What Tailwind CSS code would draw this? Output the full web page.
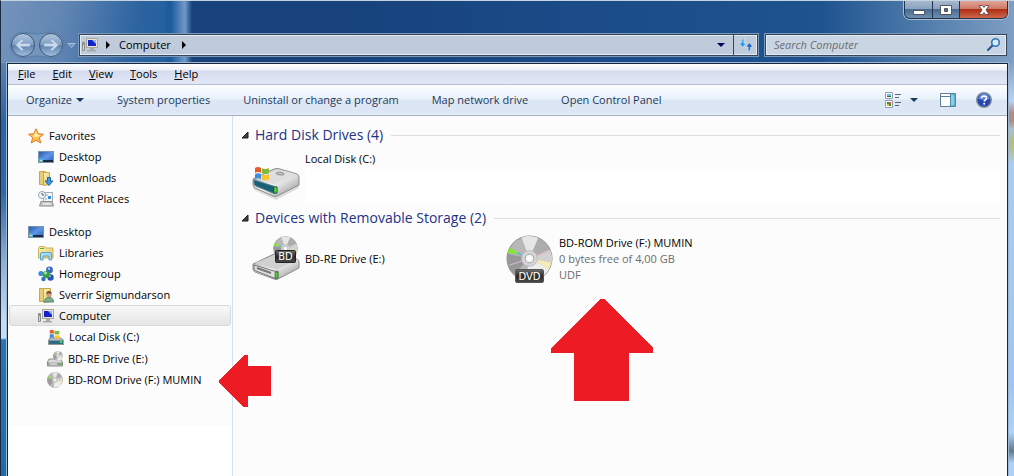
<!DOCTYPE html>
<html lang="en">

<head>
    <meta charset="UTF-8">
    <meta name="viewport" content="width=device-width, initial-scale=1.0">
    <title>Computer</title>
    <script src="https://cdn.jsdelivr.net/npm/@tailwindcss/browser@4"></script>
</head>

<body class="font-['Open_Sans','Noto_Sans',sans-serif] text-[11px] leading-4 text-black">

    <!-- Shared icons -->
    <svg class="absolute h-0 w-0" aria-hidden="true">
        <defs>
            <linearGradient id="blue-screen" x1="0" y1="0" x2="1" y2="1">
                <stop offset="0" stop-color="#2452a8" />
                <stop offset=".5" stop-color="#5f96e4" />
                <stop offset="1" stop-color="#2a5cb8" />
            </linearGradient>
            <linearGradient id="metal" x1="0" y1="0" x2="1" y2="1">
                <stop offset="0" stop-color="#9a9a9a" />
                <stop offset=".5" stop-color="#f2f2f2" />
                <stop offset="1" stop-color="#8a8a8a" />
            </linearGradient>
            <linearGradient id="folder" x1="0" y1="0" x2="1" y2="1">
                <stop offset="0" stop-color="#fff3b8" />
                <stop offset="1" stop-color="#e2c260" />
            </linearGradient>
            <linearGradient id="glass-btn" x1="0" y1="0" x2="0" y2="1">
                <stop offset="0" stop-color="#b4c8df" />
                <stop offset=".5" stop-color="#7f9dc1" />
                <stop offset=".52" stop-color="#5d82af" />
                <stop offset="1" stop-color="#a3c0dd" />
            </linearGradient>
            <linearGradient id="label" x1="0" y1="0" x2="0" y2="1">
                <stop offset="0" stop-color="#707070" />
                <stop offset=".5" stop-color="#2a2a2a" />
                <stop offset="1" stop-color="#4a4a4a" />
            </linearGradient>
        </defs>
        <symbol id="i-desktop" viewBox="0 0 16 16">
            <rect x=".5" y="2.5" width="15" height="11" fill="url(#blue-screen)" stroke="#7d93ad" />
            <path d="M1 11h14v2H1z" fill="#1c2c40" />
            <path d="M1 10l2-1 2 1v3H1z" fill="#4cb4e8" />
            <path d="M2 11h2v1H2z" fill="#ffd95a" />
        </symbol>
        <symbol id="i-computer" viewBox="0 0 16 16">
            <path d="M.5 5.500h2v8h-2z" fill="#d8d8d8" stroke="#8d8d8d" />
            <path d="M1 6h1v2H1z" fill="#5ac840" />
            <rect x="4.500" y="1.500" width="11" height="9" fill="#e6e2d8" stroke="#aaa69c" />
            <path d="M6 3h8v6H6z" fill="#1224c8" />
            <path d="M10 3h4v4z" fill="#8fb0ff" />
            <path d="M8 11h4v2h2v1.500H5V13h3z" fill="#a8a8a8" />
        </symbol>
        <symbol id="i-flag" viewBox="0 0 16 16">
            <path d="M1 2q3-2 6 0v5q-3-2-6 0z" fill="#e85a28" />
            <path d="M8 2.300q3 1.500 7 0v5q-4 1.500-7 0z" fill="#7fbc3a" />
            <path d="M1 8.300q3-2 6 0v5q-3-2-6 0z" fill="#3d8ee0" />
            <path d="M8 8.600q3 1.500 7 0v5q-4 1.500-7 0z" fill="#fbc42e" />
        </symbol>
        <symbol id="i-disc" viewBox="0 0 48 48">
            <circle cx="24" cy="24" r="23" fill="#b8b8b8" stroke="#8c8c8c" />
            <path d="M24 24L16 2.500A23 23 0 0 1 33 3z" fill="#e6e6e6" />
            <path d="M24 24L33 3A23 23 0 0 1 45 15z" fill="#adadad" />
            <path d="M24 24L45 15A23 23 0 0 1 46 31z" fill="#d2d2d2" />
            <path d="M24 24L46 28A23 23 0 0 1 44 35z" fill="#f4ecb4" />
            <path d="M24 24L44 35A23 23 0 0 1 20 46z" fill="#ededed" />
            <path d="M24 24L8 40A23 23 0 0 1 1.500 19z" fill="#989898" />
            <path d="M24 24L2 18A23 23 0 0 1 4 13z" fill="#b4b4b4" />
            <path d="M13 19.500L2 18A23 23 0 0 1 4 13z" fill="#7dee1a" />
            <path d="M18 22l-6-2.500 1-2z" fill="#35c6d8" />
            <path d="M24 24L45 17M24 24L3 31" stroke="#e4b4dc" />
            <circle cx="24" cy="24" r="8" fill="#d6d6d6" stroke="#bdbdbd" />
            <circle cx="24" cy="24" r="4.500" fill="#f3f3f3" stroke="#9d9d9d" />
            <circle cx="24" cy="24" r="2" fill="#fff" />
        </symbol>
    </svg>

    <!-- Window -->
    <div class="relative flex h-screen flex-col overflow-hidden border-t border-l border-t-[#c5d3df] border-l-[#1d2b40] bg-[#1b4a86] bg-[linear-gradient(100deg,#7293bb_0,#6387b4_60px,#2b63a0_140px,#1c5c9c_205px,transparent_206px),linear-gradient(90deg,#1c5c9c_0,#1c5c9c_170px,#5a87bd_180px,#6f99c9_184px,#17427c_191px,#17427c_340px,#1b4c89_600px,#1e5390_820px,#4a77a8_910px,#7f9fc3_100%)] bg-[length:165px_100%,100%_100%] bg-no-repeat pr-[6px] pl-[6px]">

        <!-- Frame edges below the title bar -->
        <div class="absolute top-[62px] bottom-0 left-0 w-[6px] bg-[linear-gradient(#5a82b4_0,#2b63a4_60px,#2f68a8_130px,#8fb0d6_200px,#c6dcf2_260px,#c6dcf2_275px,#2777b8_277px,#1d6cae_100%)]"></div>
        <div class="absolute top-[62px] right-0 bottom-0 w-[6px] bg-[linear-gradient(#7f9fc3_0,#9dbde0_20px,#b4d4f6_38px,#b18c80_50px,#b18c80_58px,#a9bfd0_66px,#b8bd78_78px,#b8bd78_84px,#a8cdf2_100px,#9cc6f4_320px,#aad2fa_370px,#61798c_388px,#aad2fa_400px,#aad2fa_100%)]"></div>

        <!-- Title bar -->
        <div class="flex h-8 shrink-0 justify-end">
            <div class="flex h-[18px] overflow-hidden rounded-b-md border border-t-0 border-[#22344e] shadow-[0_0_0_1px_#a9bed5]">
                <button aria-label="Minimize" class="flex w-7 items-center justify-center border-r border-[#22344e] bg-[linear-gradient(#a5b8ce_0,#8ba4c0_45%,#4a6b92_50%,#6f8fb1_100%)]">
                    <svg class="h-4 w-4" viewBox="0 0 16 16"><path d="M2.500 8.500h11v4h-11z" fill="#fff" stroke="#51555e" /></svg>
                </button>
                <button aria-label="Maximize" class="flex w-[27px] items-center justify-center border-r border-[#22344e] bg-[linear-gradient(#a5b8ce_0,#8ba4c0_45%,#4a6b92_50%,#6f8fb1_100%)]">
                    <svg class="h-4 w-4" viewBox="0 0 16 16"><path d="M2.500 3.500h11v9h-11zM6.500 6.500h3v3h-3z" fill="#fff" fill-rule="evenodd" stroke="#51555e" /></svg>
                </button>
                <button aria-label="Close" class="flex w-[47px] items-center justify-center bg-[linear-gradient(#e0a597_0,#cf7a68_45%,#b02e16_50%,#d0684a_100%)]">
                    <svg class="h-4 w-4" viewBox="0 0 16 16"><path d="M3 3.500h3.500L8 5.500l1.500-2H13L10 8l3 4.500H9.500L8 10.500l-1.500 2H3L6 8z" fill="#fff" stroke="#5b3a3a" stroke-width=".8" /></svg>
                </button>
            </div>
        </div>

        <!-- Address bar -->
        <div class="mb-[6px] flex h-6 shrink-0 items-center pr-px">
            <svg class="h-7 w-[72px] shrink-0" viewBox="0 0 72 28">
                <path d="M16 1q9 2 14 2t14-2a13 13 0 0 1 0 26q-9-2-14-2t-14 2A13 13 0 0 1 16 1z" fill="#7d9cc0" fill-opacity=".6" stroke="#4d6f99" stroke-opacity=".6" />
                <circle cx="16" cy="14" r="11.500" fill="url(#glass-btn)" stroke="#3c5878" />
                <circle cx="44" cy="14" r="11.500" fill="url(#glass-btn)" stroke="#3c5878" />
                <path d="M8.500 14l6.500-6 1.500 1.500-3 3H23v3h-9.500l3 3L15 20z" fill="#c8daec" stroke="#8aa9cb" stroke-width=".6" />
                <path d="M51.500 14l-6.500-6-1.500 1.500 3 3H37v3h9.500l-3 3L45 20z" fill="#c8daec" stroke="#8aa9cb" stroke-width=".6" />
                <path d="M61 12.500h7l-3.500 4z" fill="#6f92bb" stroke="#a9c2dd" />
            </svg>
            <div class="flex h-[22px] flex-1 items-center border border-[#33475f] bg-[#bfcbdb] shadow-[inset_0_0_0_1px_#e4ebf2,0_0_0_1px_#7c96b5]">
                <svg class="ml-[2px] h-4 w-4"><use href="#i-computer" /></svg>
                <svg class="ml-[6px] h-2 w-2" viewBox="0 0 8 8"><path d="M2 0v8l4-4z" /></svg>
                <button class="ml-[7px]">Computer</button>
                <svg class="ml-[9px] h-2 w-2" viewBox="0 0 8 8"><path d="M2 0v8l4-4z" /></svg>
                <button aria-label="Previous locations" class="mr-1 ml-auto flex h-5 w-4 items-center justify-center">
                    <svg class="h-2 w-2" viewBox="0 0 8 8"><path d="M0 2h8L4 6z" fill="#00005e" /></svg>
                </button>
                <button aria-label="Refresh" class="flex h-full w-6 items-center justify-center border-l border-[#33475f]">
                    <svg class="h-4 w-4 shrink-0" viewBox="0 0 16 16">
                        <path d="M6.500 1Q3 2 3.200 6H.8L4.800 10.500 8.300 6H5.800Q5.600 3 6.500 1z" fill="#2f9be6" stroke="#e8f3fc" stroke-width=".6" />
                        <path d="M9.500 15q3.500-1 3.300-5h2.400L11.200 5.500 7.700 10h2.500q.2 3-.7 5z" fill="#2567c4" stroke="#e8f3fc" stroke-width=".6" />
                    </svg>
                </button>
            </div>
            <div class="ml-[7px] flex h-[22px] w-[242px] items-center border border-[#33475f] bg-[#c9d5e2] shadow-[inset_0_0_0_1px_#e4ebf2,0_0_0_1px_#7c96b5]">
                <input type="text" aria-label="Search Computer" placeholder="Search Computer" class="min-w-0 flex-1 bg-transparent pl-2 italic outline-none placeholder:text-[#6b6f75]">
                <svg class="mr-1 h-4 w-4" viewBox="0 0 16 16">
                    <path d="M2 13l5-5" stroke="#2a5690" stroke-width="2.200" stroke-linecap="round" />
                    <circle cx="9.500" cy="5.500" r="3.800" fill="#d5eafa" stroke="#2f74b8" stroke-width="1.600" />
                </svg>
            </div>
        </div>

        <div class="relative flex min-h-0 flex-1 flex-col border border-b-0 border-[#17263c] shadow-[0_0_0_1px_#9db8d6]">

            <!-- Menu bar -->
            <nav class="flex h-[21px] shrink-0 items-center gap-[17px] border-b border-[#b4bdd3] bg-[linear-gradient(#fff_0,#eff1f8_6px,#d5dcee_7px,#e2e7f6_100%)] pl-[10px]">
                <button><u>F</u>ile</button>
                <button><u>E</u>dit</button>
                <button><u>V</u>iew</button>
                <button><u>T</u>ools</button>
                <button><u>H</u>elp</button>
            </nav>

            <!-- Toolbar -->
            <div class="flex h-[31px] shrink-0 items-center gap-[33px] border-b border-[#a5b1ca] bg-[linear-gradient(#fbfdff_0,#e9f2fb_14px,#dce7f5_15px,#dce6f4_28px,#e8effa_29px,#dce6f4_100%)] pl-[18px] text-[#1e395b]">
                <button class="flex items-center gap-1">Organize
                    <svg class="h-2 w-2" viewBox="0 0 8 8"><path d="M0 2h8L4 6z" fill="#1e395b" /></svg>
                </button>
                <button>System properties</button>
                <button>Uninstall or change a program</button>
                <button>Map network drive</button>
                <button>Open Control Panel</button>
                <div class="mr-[15px] ml-auto flex items-center">
                    <button aria-label="Change your view">
                        <svg class="h-4 w-4" viewBox="0 0 16 16">
                            <path d="M.5.500h7v6h-7zM.5 8.500h7v7h-7z" fill="#fff" stroke="#929cab" />
                            <path d="M2 2h4v2H2z" fill="#6dbde8" /><path d="M2 4h4v1H2z" fill="#24704a" />
                            <path d="M2 10h2v2H2zM4 12h2v2H4z" fill="#2b9a3d" /><path d="M4 10h2v2H4z" fill="#e84a3a" /><path d="M2 12h2v2H2z" fill="#e8b82a" />
                            <path d="M10 2.500h6M10 5.500h4M10 10.500h6M10 13.500h4" stroke="#53657d" />
                        </svg>
                    </button>
                    <button aria-label="More views" class="ml-2">
                        <svg class="h-2 w-4" viewBox="0 0 16 8"><path d="M1 2h8L5 6z" fill="#1e395b" /></svg>
                    </button>
                    <button aria-label="Show the preview pane" class="ml-[15px]">
                        <svg class="h-4 w-4" viewBox="0 0 16 16">
                            <path d="M.5 1.500h15v13H.5z" fill="#fff" stroke="#5f7d9c" />
                            <path d="M1 4.500h9" stroke="#5f7d9c" />
                            <path d="M10.500 2h4.500v12h-4.500z" fill="#7fd2e8" stroke="#4e8faf" />
                        </svg>
                    </button>
                    <button aria-label="Get help" class="ml-5">
                        <svg class="h-4 w-4" viewBox="0 0 16 16">
                            <circle cx="8" cy="8" r="7.300" fill="#2547b4" stroke="#8a8f98" stroke-width="1.400" />
                            <path d="M2.500 7a5.500 5.500 0 0 1 11 0q-5 2-11 0z" fill="#5f87dc" />
                            <path d="M5.500 6.300q.2-2.300 2.600-2.300 2.400.1 2.400 2.100 0 1.200-1.300 1.900-1 .6-1 1.600" fill="none" stroke="#fff" stroke-width="1.600" />
                            <circle cx="8.200" cy="11.700" r="1" fill="#fff" />
                        </svg>
                    </button>
                </div>
            </div>

            <div class="flex min-h-0 flex-1">

                <!-- Navigation pane -->
                <aside class="flex w-[225px] shrink-0 flex-col border-r border-[#d2e2f4] bg-[#fcfcfc] pt-[9px]">
                    <a href="#" class="flex h-[21px] items-center gap-[5px] pl-5">
                        <svg class="h-4 w-4" viewBox="0 0 16 16"><path d="M8 .8l2.100 4.900 5.400.5-4.100 3.500 1.300 5.300L8 12.200 3.300 15l1.300-5.300L.5 6.200l5.400-.5z" fill="#fcc04a" stroke="#e0792a" /><path d="M8 3l1.300 3.500 3 .5-2.500 2H5z" fill="#ffe9a8" /></svg>
                        Favorites
                    </a>
                    <a href="#" class="flex h-[21px] items-center gap-[5px] pl-[30px]">
                        <svg class="h-4 w-4"><use href="#i-desktop" /></svg>
                        Desktop
                    </a>
                    <a href="#" class="flex h-[21px] items-center gap-[5px] pl-[30px]">
                        <svg class="h-4 w-4" viewBox="0 0 16 16">
                            <path d="M1.500 1.500h6v13h-6z" fill="#e6cc74" stroke="#c9a84c" />
                            <path d="M5.500 2.500h6v12l-6 1z" fill="url(#folder)" stroke="#c9a84c" />
                            <path d="M9.500 7.500h3v3.500h2.500L11 15.500 7 11h2.500z" fill="#3c9ce0" stroke="#1d62a4" />
                        </svg>
                        Downloads
                    </a>
                    <a href="#" class="flex h-[21px] items-center gap-[5px] pl-[30px]">
                        <svg class="h-4 w-4" viewBox="0 0 16 16">
                            <path d="M5.500 1.500h9v9h-9z" fill="#f3f6f8" stroke="#a5a9ad" />
                            <path d="M7 4h3M7 8h2" stroke="#8fa4b8" /><path d="M10 5h3v3h-3z" fill="#2d8fe0" />
                            <circle cx="4" cy="4" r="3.500" fill="#f3f7fb" stroke="#93a3b3" />
                            <path d="M4 2v2h2" fill="none" stroke="#47617c" />
                            <path d="M3 10.500h11l1.500 4.500h-14z" fill="#c7c7c7" stroke="#8e8e8e" />
                            <path d="M5 13h8" stroke="#fff" />
                        </svg>
                        Recent Places
                    </a>
                    <a href="#" class="mt-3 flex h-[21px] items-center gap-[5px] pl-5">
                        <svg class="h-4 w-4"><use href="#i-desktop" /></svg>
                        Desktop
                    </a>
                    <a href="#" class="flex h-[21px] items-center gap-[5px] pl-[30px]">
                        <svg class="h-4 w-4" viewBox="0 0 16 16">
                            <path d="M.5 3.500l1-2h5l1 1.500h7.500v10H.5z" fill="url(#folder)" stroke="#cfae55" />
                            <path d="M2 3.500h4" stroke="#58b03c" />
                            <path d="M2.500 15V9q0-1.500 1.500-1.500h8q1.500 0 1.500 1.500v6H11v-4H5v4z" fill="#a5dcf4" stroke="#58a5ce" />
                        </svg>
                        Libraries
                    </a>
                    <a href="#" class="flex h-[21px] items-center gap-[5px] pl-[30px]">
                        <svg class="h-4 w-4" viewBox="0 0 16 16">
                            <circle cx="11.500" cy="4" r="3.400" fill="#3a64c8" /><circle cx="3" cy="7.500" r="2.600" fill="#3f8ad2" />
                            <circle cx="12.500" cy="11.500" r="3.200" fill="#2b53b4" /><circle cx="5.500" cy="13" r="2.200" fill="#2b70c0" />
                            <circle cx="8.300" cy="8.500" r="3.600" fill="#32a03c" />
                            <circle cx="7.500" cy="7" r="1.500" fill="#a8e49c" /><circle cx="11" cy="2.800" r="1.200" fill="#a9c8f4" /><circle cx="12" cy="10.300" r="1" fill="#8fb0ec" />
                        </svg>
                        Homegroup
                    </a>
                    <a href="#" class="flex h-[21px] items-center gap-[5px] pl-[30px]">
                        <svg class="h-4 w-4" viewBox="0 0 16 16">
                            <path d="M1.500 1.500h6v13h-6z" fill="#e6cc74" stroke="#c9a84c" />
                            <path d="M5.500 1.500h7v13l-7 1z" fill="url(#folder)" stroke="#c9a84c" />
                            <path d="M6.500 15q0-4.500 4.500-4.500t4.500 4.500z" fill="#7fae8c" stroke="#5b8a70" />
                            <circle cx="11" cy="7.500" r="2.600" fill="#cf9a74" /><path d="M8.300 7q0-3 2.700-3t2.700 3q-2.500-1.500-5.400 0z" fill="#6b4a34" />
                        </svg>
                        Sverrir Sigmundarson
                    </a>
                    <a href="#" aria-current="page" class="mx-px flex h-[21px] items-center gap-[5px] rounded-[3px] border border-[#d9d9d9] bg-linear-to-b from-[#f8f8f8] to-[#e5e5e5] pl-7">
                        <svg class="h-4 w-4"><use href="#i-computer" /></svg>
                        Computer
                    </a>
                    <a href="#" class="flex h-[21px] items-center gap-[5px] pl-10">
                        <svg class="h-4 w-4" viewBox="0 0 16 16">
                            <path d="M2 9h11l3 2.500v4H.5V11z" fill="#b9c0c4" stroke="#7b8589" stroke-width=".8" />
                            <path d="M1 11.500h14v3.500H1z" fill="#2f6c84" /><path d="M12 12h2v2h-2z" fill="#4ce04a" />
                            <svg x="1" y="0" width="11" height="11" viewBox="0 0 16 16"><use href="#i-flag" /></svg>
                        </svg>
                        Local Disk (C:)
                    </a>
                    <a href="#" class="mt-px flex h-[21px] items-center gap-[5px] pl-[39px]">
                        <svg class="h-4 w-4" viewBox="0 0 16 16">
                            <path d="M2 8h11l2.500 3v4H.5v-4z" fill="#dcdcdc" stroke="#8a8a8a" />
                            <path d="M1 11.500h14v3H1z" fill="#9c9c9c" /><path d="M3 13h7" stroke="#fff" /><path d="M12 12h2v2h-2z" fill="#4cc83a" />
                            <svg x="6" y="0" width="10" height="10" viewBox="0 0 48 48"><use href="#i-disc" /></svg>
                        </svg>
                        BD-RE Drive (E:)
                    </a>
                    <a href="#" class="flex h-[21px] items-center gap-[5px] pl-[39px]">
                        <svg class="h-4 w-4" viewBox="0 0 48 48"><use href="#i-disc" /></svg>
                        BD-ROM Drive (F:) MUMIN
                    </a>
                    <div class="mt-9 flex-1 bg-white"></div>
                </aside>

                <!-- Drives -->
                <main class="min-w-0 flex-1 bg-[#fcfcfc] pt-[7px] pr-[7px] pl-2">
                    <section>
                        <h2 class="flex h-6 items-center text-[14px] leading-6 text-[#1e3287]">
                            <svg class="mr-[6px] h-2 w-2" viewBox="0 0 8 8"><path d="M7 1v6H1z" fill="#404040" stroke="#1c1c1c" /></svg>
                            Hard Disk Drives (4)
                            <span class="ml-2 h-px flex-1 bg-[#dedede]"></span>
                        </h2>
                        <div class="flex h-[59px] pl-[11px]">
                            <a href="#" class="flex flex-1 gap-[5px]">
                                <svg class="mt-2 h-12 w-12" viewBox="0 0 48 48">
                                    <path d="M1 31L24 41 47 30v3L24 45 2 35z" fill="#000" fill-opacity=".12" />
                                    <path d="M1 24L22 14q3-1 6 0l17 5q2 1 2 3v8L25 41q-2 1-4 0L3 33q-2-1-2-3z" fill="url(#metal)" stroke="#777" stroke-width=".8" />
                                    <path d="M3 23L23 15q2-1 4 0l17 5-20 9q-2 1-3 0z" fill="#dedede" />
                                    <path d="M24 18q4-2 7 0t-2 2-5-2z" fill="#c4c4c4" stroke="#909090" />
                                    <path d="M2 25l19 6q3 1 4 1v6q-2 1-4 0L4 31q-2-1-2-3z" fill="#1d6074" stroke="#447c8c" />
                                    <path d="M22 32h3v6h-3z" fill="#50e030" stroke="#173f28" stroke-width=".6" />
                                    <svg x="2" y="11" width="16" height="16" viewBox="0 0 16 16"><use href="#i-flag" /></svg>
                                </svg>
                                <span class="flex flex-1 flex-col pt-1">
                                    <span>Local Disk (C:)</span>
                                    <span class="mt-[2px] h-[34px] bg-white"></span>
                                </span>
                            </a>
                        </div>
                    </section>

                    <section>
                        <h2 class="flex h-6 items-center text-[14px] leading-6 text-[#1e3287]">
                            <svg class="mr-[6px] h-2 w-2" viewBox="0 0 8 8"><path d="M7 1v6H1z" fill="#404040" stroke="#1c1c1c" /></svg>
                            Devices with Removable Storage (2)
                            <span class="ml-2 h-px flex-1 bg-[#dedede]"></span>
                        </h2>
                        <div class="flex items-center pt-1 pl-[11px]">
                            <a href="#" class="flex w-[254px] items-center gap-[5px]">
                                <svg class="h-12 w-12" viewBox="0 0 48 48">
                                    <path d="M1 29L22 19q3-1 6 0l17 5q2 1 2 3v6L26 44q-2 1-4 0L3 37q-2-1-2-3z" fill="url(#metal)" stroke="#777" stroke-width=".8" />
                                    <path d="M3 28L23 20q2-1 4 0l17 5-18 9q-2 1-4 0z" fill="#d0d0d0" />
                                    <path d="M2 30l20 6q2 1 4 0v7q-2 1-4 0L4 36q-2-1-2-3z" fill="#e0e0e0" stroke="#777" />
                                    <path d="M5 33l14 5" stroke="#777" stroke-width="2" />
                                    <path d="M23 37h3v6h-3z" fill="#50d030" stroke="#2a5a28" stroke-width=".6" />
                                    <svg x="21" y="1" width="25" height="25" viewBox="0 0 48 48"><use href="#i-disc" /></svg>
                                    <rect x="23.500" y="15.500" width="20" height="12" rx="1" fill="url(#label)" stroke="#222" />
                                    <text x="33.500" y="25" fill="#fff" font-family="DejaVu Sans, sans-serif" font-size="10" text-anchor="middle">BD</text>
                                </svg>
                                BD-RE Drive (E:)
                            </a>
                            <a href="#" class="flex items-center gap-[5px]">
                                <svg class="h-[50px] w-12" viewBox="0 0 48 50">
                                    <svg x="0" y="1" width="47" height="47" viewBox="0 0 48 48"><use href="#i-disc" /></svg>
                                    <rect x="9.500" y="35.500" width="28" height="13" rx="1.500" fill="url(#label)" stroke="#555" />
                                    <text x="23.500" y="46" fill="#fff" font-family="DejaVu Sans, sans-serif" font-size="10" text-anchor="middle">DVD</text>
                                </svg>
                                <span class="flex flex-col text-[#6d6d6d]">
                                    <span class="text-black">BD-ROM Drive (F:) MUMIN</span>
                                    <span>0 bytes free of 4,00 GB</span>
                                    <span>UDF</span>
                                </span>
                            </a>
                        </div>
                    </section>
                </main>
            </div>

            <!-- Marker arrows -->
            <svg class="absolute top-[291px] left-[211px] h-[52px] w-[52px]" viewBox="0 0 52 52" shape-rendering="crispEdges"><path d="M0 25L25 0h4v11h23v30H29v11h-4L0 28z" fill="#ed1c24" /></svg>
            <svg class="absolute top-[235px] left-[543px] h-[102px] w-[102px]" viewBox="0 0 102 102" shape-rendering="crispEdges"><path d="M0 49L49 0h5l48 49v5H78v48H23V54H0z" fill="#ed1c24" /></svg>
        </div>
    </div>

</body>

</html>
